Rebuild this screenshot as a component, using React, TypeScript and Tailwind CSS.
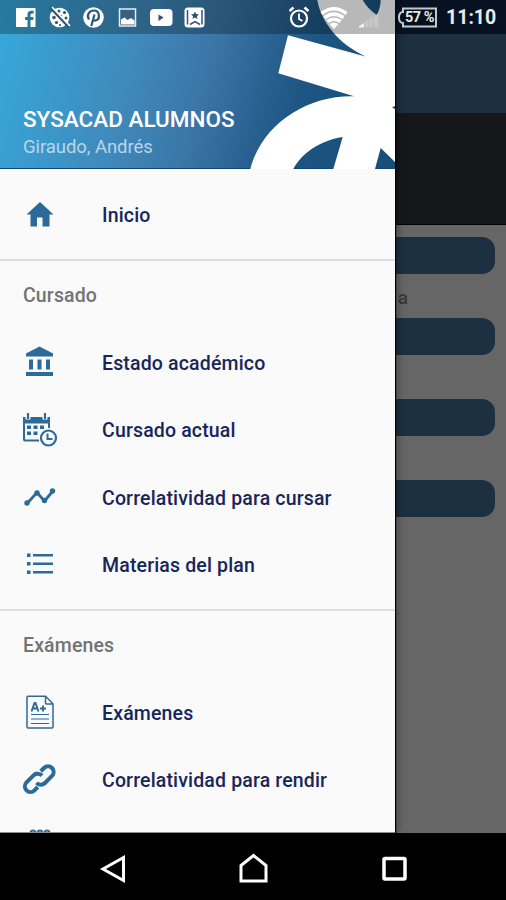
import type { ReactNode } from 'react'

interface MenuEntry {
  label: string
  icon: ReactNode
}

interface MenuSection {
  title: string
  entries: MenuEntry[]
}

const HomeIcon = () => (
  <svg width="36" height="36" viewBox="0 0 36 36" fill="currentColor">
    <path d="M18 5 4.500 17.500h4V29.500H15V20.500h5.500v9h7V17.500h4z" />
  </svg>
)

const BankIcon = () => (
  <svg width="36" height="36" viewBox="0 0 36 36" fill="currentColor">
    <path d="M17.500 1.500 31 8.500v3H4v-3zM7 14.500h4v10H7zM15.500 14.500h4v10h-4zM24 14.500h4v10h-4zM4 27h27v4H4z" />
  </svg>
)

const CalendarIcon = () => (
  <svg width="36" height="36" viewBox="0 0 36 36" fill="currentColor">
    <path d="M1 5h27v6.500H1z" />
    <path d="M2 7v20.500q0 1 1 1h14M27 9v7" fill="none" stroke="currentColor" strokeWidth="2" />
    <path d="M6 1v6.500M23 1v6.500" stroke="#fafafa" strokeWidth="5" />
    <path d="M6 1v6M23 1v6" stroke="currentColor" strokeWidth="2.200" />
    <path d="M5 13.500h4V17H5zM11.500 13.500h4V17h-4zM18 13.500h4V17h-4zM5 19.500h4V23H5zM11.500 19.500h4V23h-4z" />
    <circle cx="26.500" cy="26" r="7.500" fill="#fafafa" stroke="currentColor" strokeWidth="2.200" />
    <path d="M25.500 21.500V27h5" fill="none" stroke="currentColor" strokeWidth="2" />
  </svg>
)

const TimelineIcon = () => (
  <svg width="36" height="36" viewBox="0 0 36 36" fill="currentColor">
    <path d="M5 23.500 15 12.500l7.500 8.500L30.500 11.500" fill="none" stroke="currentColor" strokeWidth="2.800" />
    <circle cx="5" cy="23" r="2.700" />
    <circle cx="15" cy="13" r="2.700" />
    <circle cx="22.500" cy="20.500" r="2.700" />
    <circle cx="30.500" cy="11" r="2.700" />
  </svg>
)

const ListIcon = () => (
  <svg width="36" height="36" viewBox="0 0 36 36" fill="currentColor">
    <path d="M5 6.500h3.500V10H5zM5 15h3.500v3.500H5zM5 23.500h3.500V27H5zM11 7h20v2.500H11zM11 15.500h20V18H11zM11 24h20v2.500H11z" />
  </svg>
)

const ExamIcon = () => (
  <svg width="36" height="36" viewBox="0 0 36 36" fill="none" stroke="currentColor" strokeWidth="1.500">
    <path d="M6 1.200h17.500l7.500 7.500V32q0 1-1 1H6q-1 0-1-1V2.200q0-1 1-1z" />
    <path d="M23.500 1.500V8q0 1 1 1H31" />
    <path d="m9.500 16.500 3-8.500h1l3 8.500M10.500 13.500h5M18 13.500h6M21 10.500v6" strokeWidth="1.900" />
    <path d="M9 19.500h18M9 24h18M9 28.500h18" strokeWidth="1.200" />
  </svg>
)

const LinkIcon = () => (
  <svg width="36" height="36" viewBox="0 0 24 24" fill="none" stroke="currentColor" strokeWidth="2.700">
    <path d="m12.500 6.200 2.200-2.200a3.800 3.800 0 0 1 5.300 0 3.800 3.800 0 0 1 0 5.300l-4.700 4.700a3.800 3.800 0 0 1-5.600-.2" />
    <path d="m10.500 16.700-2.200 2.200a3.800 3.800 0 0 1-5.300 0 3.800 3.800 0 0 1 0-5.300l4.700-4.700a3.800 3.800 0 0 1 5.600.2" />
  </svg>
)

const sections: MenuSection[] = [
  {
    title: 'Cursado',
    entries: [
      { label: 'Estado académico', icon: <BankIcon /> },
      { label: 'Cursado actual', icon: <CalendarIcon /> },
      { label: 'Correlatividad para cursar', icon: <TimelineIcon /> },
      { label: 'Materias del plan', icon: <ListIcon /> },
    ],
  },
  {
    title: 'Exámenes',
    entries: [
      { label: 'Exámenes', icon: <ExamIcon /> },
      { label: 'Correlatividad para rendir', icon: <LinkIcon /> },
    ],
  },
]

const MenuRow = ({ label, icon }: MenuEntry) => (
  <li className="flex h-[67.5px] items-center pl-[22px]">
    <span className="w-20 shrink-0 text-[#2b6a99]">{icon}</span>
    <span className="pt-px text-[19.5px] font-medium tracking-[0.16px] whitespace-nowrap text-[#17265a]">{label}</span>
  </li>
)

const DrawerHeader = () => (
  <header className="relative flex h-[169px] shrink-0 flex-col justify-end bg-[linear-gradient(105deg,#36a9dc_0%,#4089bb_34%,#3a75a6_52%,#1d5583_74%,#174f79_100%)] pb-2 pl-[23px]">
    <svg className="absolute top-0 left-0" width="395" height="169" viewBox="0 0 395 169">
      <path fill="#14467a" d="M0 168h395v1H0z" />
      <path
        fill="#fff"
        d="M317.300 0C321 21 337 43 365.500 56.500L288 35.300 278.300 73.300 354 96.200C307 95 262 124 250.300 169H293.300C302 153 319 141 342.700 137L333.300 169H375L380.700 148 395 162V0H380.700C380.500 6 379 11 376.700 15 371 11 366 6 362.700 0Z"
      />
      <path fill="#174f79" d="m392 107.500 3-1.500v3z" />
    </svg>
    <h1 className="relative text-[22.5px] leading-7 font-medium text-white">SYSACAD ALUMNOS</h1>
    <p className="relative text-[18.5px] leading-7 tracking-[-0.06px] text-[#b9d6ea]">Giraudo, Andrés</p>
  </header>
)

const Drawer = () => (
  <aside className="absolute top-0 left-0 flex h-[833px] w-[395px] flex-col overflow-hidden border-b border-[#8c8c8c] bg-[#fafafa] shadow-[1px_0_1px_#000,3px_0_8px_rgba(0,0,0,0.3)]">
    <DrawerHeader />
    <ul className="flex h-[92px] shrink-0 flex-col border-b-2 border-[#dedede] pt-3">
      <MenuRow label="Inicio" icon={<HomeIcon />} />
    </ul>
    {sections.map((section) => (
      <section key={section.title} className="h-[350px] shrink-0 border-b-2 border-[#dedede]">
        <h2 className="flex h-[68px] items-center pt-0.5 pl-[23px] text-[19.5px] font-medium tracking-[0.14px] text-[#737373]">
          {section.title}
        </h2>
        <ul>
          {section.entries.map((entry) => (
            <MenuRow key={entry.label} {...entry} />
          ))}
          {section.title === 'Exámenes' && (
            <li className="pt-[15px] pl-[29px] text-[#2b6a99]">
              <svg width="22" height="8" viewBox="0 0 22 8" fill="none" stroke="currentColor" strokeWidth="2">
                <circle cx="4" cy="4" r="2.500" />
                <circle cx="11" cy="4" r="2.500" />
                <circle cx="18" cy="4" r="2.500" />
              </svg>
            </li>
          )}
        </ul>
      </section>
    ))}
  </aside>
)

const NotificationIcons = () => (
  <svg width="192" height="24" viewBox="0 0 192 24" fill="#fff">
    <path d="M0 3h19.500v19h-5v-7h2.600l.4-3h-3V10q0-1.500 1.500-1.500h1.700V5.800h-2.500q-3.700 0-3.700 3.700V12H9v3h2.500v7H0z" />
    <circle cx="43.500" cy="12.500" r="9.800" />
    <g fill="#28587c">
      <circle cx="43" cy="6" r="1.500" />
      <circle cx="48.500" cy="7.500" r="1.600" />
      <circle cx="38" cy="12.500" r="1.800" />
      <circle cx="40.500" cy="17.500" r="1.600" />
      <circle cx="50" cy="13" r="1.500" />
      <circle cx="45" cy="11" r="1.200" />
      <circle cx="44" cy="20" r="1.100" />
    </g>
    <path d="m34 2 19 20" stroke="#28587c" strokeWidth="3" />
    <path d="m36 2 18 19" stroke="#fff" strokeWidth="1.800" />
    <circle cx="77.500" cy="12.500" r="10.300" />
    <path
      d="M73 14.500c-3-4.500.5-9 5-9 6 0 6.500 9 1.500 10-1.500.2-2.500-1-2.500-1M78.500 9.500 75.300 21"
      fill="none"
      stroke="#285778"
      strokeWidth="2.200"
    />
    <path d="M103.500 4h16v17h-16z" fill="#366281" stroke="#e5edf2" strokeWidth="1.500" />
    <path d="M105 14.500l3.500-2 3 2.500 3.500-2 3.500 2.500v4H105z" />
    <rect x="134" y="4" width="22.500" height="17" rx="4" />
    <path d="m142.500 9.500 5 3-5 3.500z" fill="#2b526e" />
    <rect x="168.500" y="2.500" width="20" height="20" rx="3.500" />
    <path d="M171.500 5v14.500M174 19.500l5-3 5 3M186 5v14.500" fill="none" stroke="#3c4d78" strokeWidth="1.500" />
    <path d="m179 6.500 1.200 2.600 2.800.3-2.100 1.900.6 2.800-2.500-1.500-2.500 1.500.6-2.800-2.100-1.900 2.800-.3z" fill="#2b526e" />
  </svg>
)

const SystemIcons = () => (
  <div className="flex items-center">
    <svg width="22" height="24" viewBox="0 0 22 24" fill="none" stroke="#fff" strokeWidth="2.200">
      <circle cx="10" cy="13.500" r="8" />
      <path d="M10 8.500V14l3.500 2" strokeWidth="1.800" />
      <path d="m.5 6 4-3.500M19.500 6l-4-3.500" strokeWidth="2.600" />
    </svg>
    <svg className="ml-2" width="30" height="24" viewBox="0 0 30 24" fill="none" stroke="#fff" strokeWidth="3.600">
      <path d="M2.500 8.500Q15-1 27.500 8.500" />
      <path d="M5.500 12.800Q15 5.500 24.500 12.800" />
      <path d="M8.500 16.500q6.500-4.500 13 0" />
      <path d="m10.500 19 4.500 5 4.500-5q-4.500-3-9 0z" fill="#fff" stroke="none" />
    </svg>
    <svg className="ml-2" width="26" height="24" viewBox="0 0 26 24" fill="#fff">
      <path d="M2 22.500v-1.500l5-3v4.500z" opacity="0.8" />
      <path d="M8 22.500v-6l3.500-2v8zM12.500 22.500v-9l3-2v11zM16.500 22.500v-11l5-3.500v14.500z" opacity="0.22" />
    </svg>
    <div className="relative ml-[14px] flex h-6 w-[41px] items-center justify-center">
      <svg className="absolute inset-0" width="41" height="24" viewBox="0 0 41 24" fill="none" stroke="#c3c8cc" strokeWidth="2">
        <path d="M6 3.500h33v18H6v-3.500q-4 0-4-5.500t4-5.500z" fill="#06101b" />
      </svg>
      <span className="relative pt-0.5 pl-1 text-[14.5px] leading-none font-bold tracking-[-0.5px] whitespace-nowrap text-[#e5e8eb]">57 %</span>
    </div>
    <span className="ml-2 w-[53px] pt-0.5 text-[19.5px] leading-6 font-bold whitespace-nowrap text-[#e8ebee]">11:10</span>
  </div>
)

const StatusBar = () => (
  <div className="absolute top-0 left-0 flex h-[34px] w-full items-center justify-between bg-[linear-gradient(90deg,rgba(0,0,0,0.28)_395px,rgba(0,10,25,0.78)_395px)] pr-[7px] pl-4">
    <NotificationIcons />
    <SystemIcons />
  </div>
)

const NavigationBar = () => (
  <nav className="flex h-[67px] shrink-0 items-center bg-black pt-1 pl-[98px] text-white">
    <svg width="28" height="32" viewBox="0 0 28 32" fill="none" stroke="currentColor" strokeWidth="3">
      <path d="M25.500 4.500v23L5 16z" />
    </svg>
    <svg className="ml-[111px]" width="32" height="32" viewBox="0 0 32 32" fill="none" stroke="currentColor" strokeWidth="3">
      <path d="M4 28v-15.500L16.500 2.500 29 12.500v15.500z" />
    </svg>
    <svg className="ml-[111px]" width="28" height="28" viewBox="0 0 28 28" fill="none" stroke="currentColor" strokeWidth="3.500">
      <rect x="4" y="3.500" width="21" height="20.500" rx="1" />
    </svg>
  </nav>
)

export default function App() {
  return (
    <div className="relative flex h-[900px] w-[506px] flex-col overflow-hidden bg-[#666] font-['Roboto',sans-serif]">
      <main className="flex flex-1 flex-col">
        <div className="h-[113px] bg-[#1d2f40]" />
        <div className="h-28 border-b border-black bg-[#15171a]" />
        <div className="flex flex-col gap-[44px] px-[11px] pt-3">
          <div className="relative h-[37px] rounded-[13px] bg-[#1d3042]">
            <span className="absolute top-[49px] right-[87px] text-[19px] leading-6 font-medium text-[#383838]">a</span>
          </div>
          <div className="h-[37px] rounded-[13px] bg-[#1d3042]" />
          <div className="h-[37px] rounded-[13px] bg-[#1d3042]" />
          <div className="h-[37px] rounded-[13px] bg-[#1d3042]" />
        </div>
      </main>
      <Drawer />
      <StatusBar />
      <NavigationBar />
    </div>
  )
}
